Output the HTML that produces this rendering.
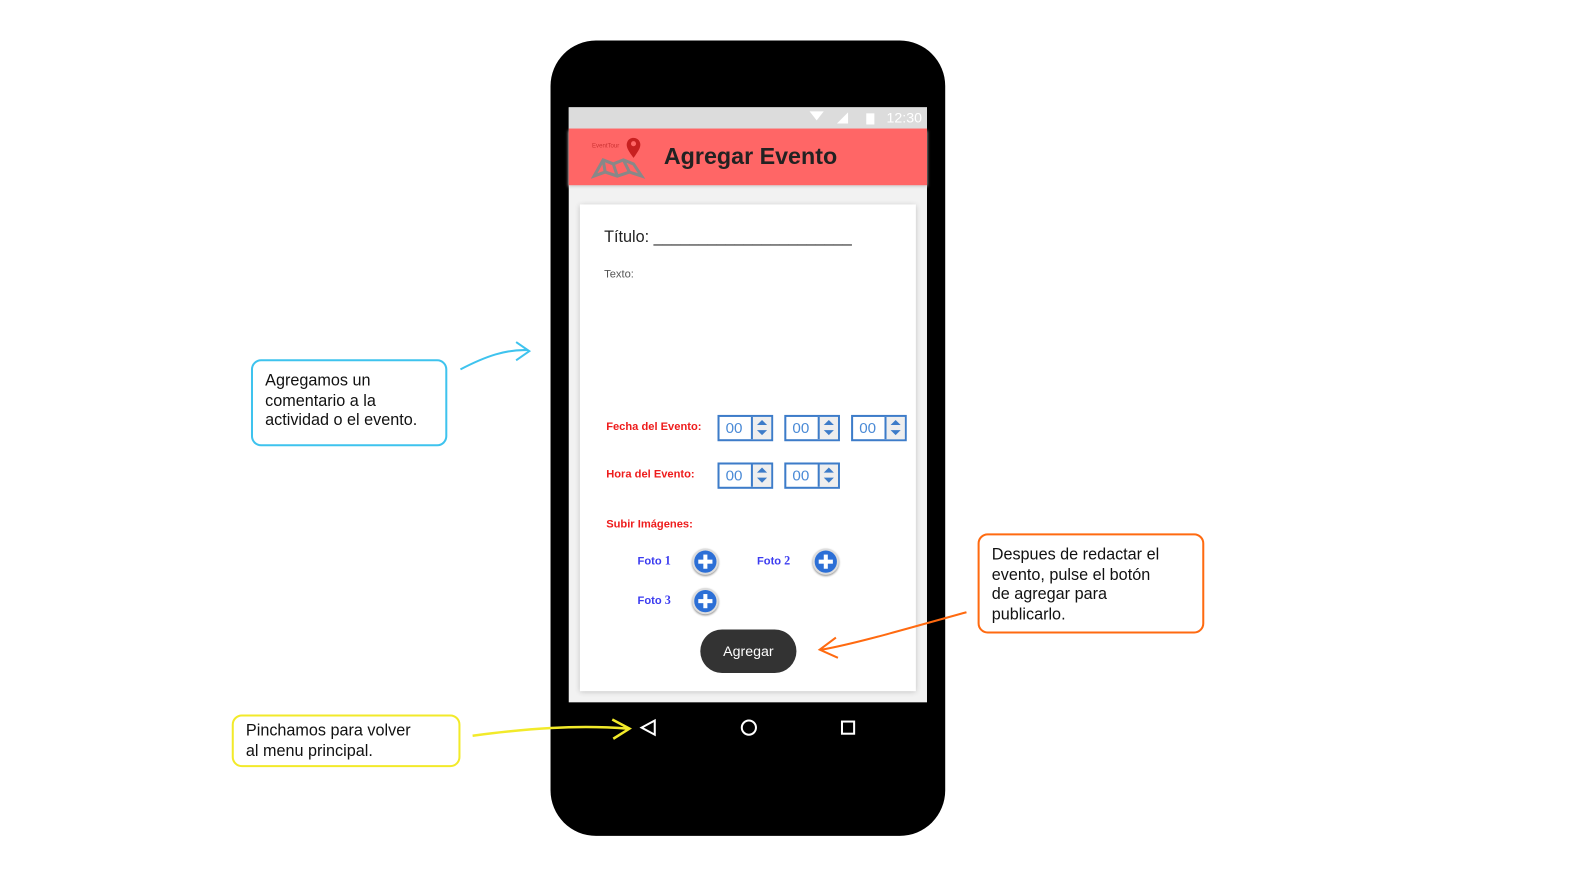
<!DOCTYPE html><html><head><meta charset="utf-8"><style>
body{margin:0;width:1590px;height:876px;background:#fff;position:relative;font-family:"Liberation Sans",sans-serif;overflow:hidden}
#w{position:absolute;left:0;top:0;width:1570px;height:865px;transform:scale(1.012);transform-origin:0 0}
.a{position:absolute}
.box{position:absolute;border:2px solid;border-radius:10px;font-size:16px;line-height:19.5px;color:#111;padding:10px 12px;box-sizing:border-box;white-space:nowrap}
.sp{position:absolute;width:55px;height:26px;border:2px solid #3d7cc9;box-sizing:border-box;font-size:15px;color:#4a8ad6;background:#fff}
.sp span{position:absolute;left:6px;top:3px}
.sp i{position:absolute;right:0;top:0;width:18px;height:22px;background:#eee;border-left:2px solid #3d7cc9}
.sp i:before{content:"";position:absolute;left:4px;top:3px;border:5px solid transparent;border-bottom:5px solid #3d7cc9;border-top:0}
.sp i:after{content:"";position:absolute;left:4px;top:13px;border:5px solid transparent;border-top:5px solid #3d7cc9;border-bottom:0}
.lb{position:absolute;color:#ee1c1c;font-weight:bold;font-size:11px}
.ft{position:absolute;color:#3c3cf0;font-weight:bold;font-size:12px;font-family:"Liberation Serif",serif}
.ft b{font-family:"Liberation Sans",sans-serif;font-size:11px}
.pl{position:absolute;width:22px;height:22px;border-radius:50%;background:#2c6fd6;border:2px solid #ddd;box-shadow:0 1px 2px #888}
.pl:before{content:"";position:absolute;left:4px;top:9px;width:14px;height:4px;background:#fff}
.pl:after{content:"";position:absolute;left:9px;top:4px;width:4px;height:14px;background:#fff}
</style></head><body><div id="w">
<div class="a" style="left:544px;top:40px;width:390px;height:786px;background:#000;border-radius:45px"></div>
<div class="a" style="left:562px;top:106px;width:354px;height:588px;background:#f2f2f2"></div>
<div class="a" style="left:562px;top:106px;width:354px;height:21px;background:#dcdcdc;color:#fff;font-size:14px"><span class="a" style="left:314px;top:2px">12:30</span><span class="a" style="left:294px;top:6px;width:8px;height:11px;background:#fff"></span><span class="a" style="left:265px;top:5px;border-left:11px solid transparent;border-bottom:11px solid #fff"></span><span class="a" style="left:238px;top:4px;border:7px solid transparent;border-top:9px solid #fff"></span></div>
<div class="a" style="left:562px;top:127px;width:354px;height:56px;background:#ff6666;box-shadow:0 2px 3px #ccc"></div>
<svg class="a" style="left:584px;top:134px" width="54" height="44"><text x="1" y="12" font-size="6" fill="#c33">EventTour</text><path d="M3 40 L12 24 L22 28 L32 24 L42 28 L50 40 L38 36 L26 40 L14 36 Z M12 24 L14 36 M22 28 L26 40 M32 24 L38 36" fill="none" stroke="#888" stroke-width="3"/><path d="M42 22 C36 14 34 10 36 6 C38 1 46 1 48 6 C50 10 48 14 42 22Z" fill="#c82020"/><circle cx="42" cy="8" r="2.5" fill="#ff6666"/></svg>
<div class="a" style="left:656px;top:141px;font-size:23px;font-weight:bold;color:#222">Agregar Evento</div>
<div class="a" style="left:573px;top:202px;width:332px;height:481px;background:#fff;box-shadow:0 1px 5px #bbb"></div>
<div class="a" style="left:597px;top:226px;font-size:16px;color:#222">Título: ______________________</div>
<div class="a" style="left:597px;top:265px;font-size:11px;color:#555">Texto:</div>
<div class="lb" style="left:599px;top:416px">Fecha del Evento:</div>
<div class="sp" style="left:709px;top:410px"><span>00</span><i></i></div>
<div class="sp" style="left:775px;top:410px"><span>00</span><i></i></div>
<div class="sp" style="left:841px;top:410px"><span>00</span><i></i></div>
<div class="lb" style="left:599px;top:463px">Hora del Evento:</div>
<div class="sp" style="left:709px;top:457px"><span>00</span><i></i></div>
<div class="sp" style="left:775px;top:457px"><span>00</span><i></i></div>
<div class="lb" style="left:599px;top:512px">Subir Imágenes:</div>
<div class="ft" style="left:630px;top:547px"><b>Foto</b> 1</div><div class="pl" style="left:684px;top:542px"></div>
<div class="ft" style="left:748px;top:547px"><b>Foto</b> 2</div><div class="pl" style="left:803px;top:542px"></div>
<div class="ft" style="left:630px;top:586px"><b>Foto</b> 3</div><div class="pl" style="left:684px;top:581px"></div>
<div class="a" style="left:692px;top:622px;width:95px;height:43px;border-radius:22px;background:#333;color:#fff;font-size:14px;text-align:center;line-height:43px">Agregar</div>
<svg class="a" style="left:600px;top:700px" width="260" height="40"><path d="M47 12 L34 19 L47 26Z" fill="none" stroke="#fff" stroke-width="2"/><circle cx="140" cy="19" r="7" fill="none" stroke="#fff" stroke-width="2"/><rect x="232" y="13" width="12" height="12" fill="none" stroke="#fff" stroke-width="2"/></svg>
<svg class="a" style="left:0;top:0" width="1590" height="876"><path d="M455 365 C480 352 500 345 522 346 M510 338 L523 347 L510 356" fill="none" stroke="#3ec3ee" stroke-width="2"/><path d="M467 727 C520 720 570 716 620 720 M605 711 L622 720 L606 730" fill="none" stroke="#f2ea2a" stroke-width="2.5"/><path d="M955 605 C900 620 850 635 812 642 M826 630 L810 642 L828 650" fill="none" stroke="#ff6a10" stroke-width="2"/></svg>
<div class="box" style="left:248px;top:355px;width:194px;height:86px;border-color:#3ec3ee">Agregamos un<br>comentario a la<br>actividad o el evento.</div>
<div class="box" style="left:229px;top:706px;width:226px;height:52px;border-color:#f2ea2a;padding-top:5px">Pinchamos para volver<br>al menu principal.</div>
<div class="box" style="left:966px;top:527px;width:224px;height:99px;border-color:#ff6a10">Despues de redactar el<br>evento, pulse el botón<br>de agregar para<br>publicarlo.</div>
</div></body></html>
